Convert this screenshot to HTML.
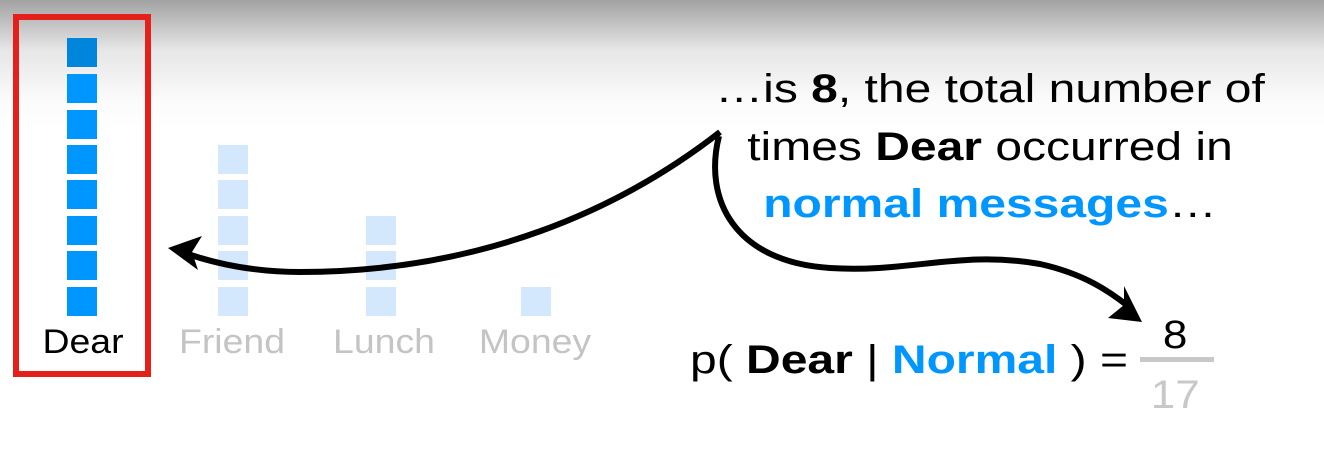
<!DOCTYPE html>
<html><head><style>
body{margin:0;width:1324px;height:450px;overflow:hidden;font-family:"Liberation Sans",sans-serif;background:linear-gradient(#a2a2a2 0px,#e6e6e6 50px,#fbfbfb 100px,#fff 130px);position:relative}
.sq{position:absolute;width:30px;height:29px}
.d{background:#0096ff}
.l{background:#d3e8fd}
.lab{position:absolute;font-size:34px;line-height:34px;top:325px;transform:translateX(-50%) scaleX(1.1);color:#c4c4c4;white-space:nowrap}
.t{position:absolute;font-size:40px;line-height:40px;left:690px;width:600px;text-align:center;white-space:nowrap;transform:scaleX(1.2)}
b{font-weight:bold}
.bl{color:#0096ff}
</style></head><body>
<div style="position:absolute;left:13px;top:14px;width:126px;height:351px;border:6px solid #e3201a"></div>
<div class="sq d" style="left:67px;top:38px;background:#0085dd"></div>
<div class="sq d" style="left:67px;top:74px"></div>
<div class="sq d" style="left:67px;top:110px"></div>
<div class="sq d" style="left:67px;top:145px"></div>
<div class="sq d" style="left:67px;top:180px"></div>
<div class="sq d" style="left:67px;top:216px"></div>
<div class="sq d" style="left:67px;top:251px"></div>
<div class="sq d" style="left:67px;top:287px"></div>
<div class="sq l" style="left:218px;top:145px"></div>
<div class="sq l" style="left:218px;top:180px"></div>
<div class="sq l" style="left:218px;top:216px"></div>
<div class="sq l" style="left:218px;top:251px"></div>
<div class="sq l" style="left:218px;top:287px"></div>
<div class="sq l" style="left:366px;top:216px"></div>
<div class="sq l" style="left:366px;top:251px"></div>
<div class="sq l" style="left:366px;top:287px"></div>
<div class="sq l" style="left:521px;top:287px"></div>
<div class="lab" style="left:83px;color:#000">Dear</div>
<div class="lab" style="left:232px">Friend</div>
<div class="lab" style="left:384px">Lunch</div>
<div class="lab" style="left:535px">Money</div>
<div class="t" style="top:69px">…is <b>8</b>, the total number of</div>
<div class="t" style="top:127px">times <b>Dear</b> occurred in</div>
<div class="t" style="top:184px"><b class="bl">normal messages</b>…</div>
<div style="position:absolute;left:690px;top:340px;font-size:40px;line-height:40px;white-space:nowrap;transform-origin:0 0;transform:scaleX(1.2)">p( <b>Dear</b> | <b class="bl">Normal</b> ) =</div>
<div style="position:absolute;left:1140px;top:357px;width:74px;height:5px;background:#c8c8c8"></div>
<div style="position:absolute;left:1164px;top:315px;font-size:40px;line-height:40px;transform:scaleX(1.1)">8</div>
<div style="position:absolute;left:1153px;top:375px;font-size:40px;line-height:40px;color:#c8c8c8;transform:scaleX(1.1)">17</div>
<svg width="1324" height="450" style="position:absolute;left:0;top:0">
<path d="M720 132 C620 210 480 272 300 272 C250 272 210 262 182 252" fill="none" stroke="#000" stroke-width="6"/>
<polygon points="168,248 202,236 192,252 198,270" fill="#000"/>
<path d="M719 136 C703 200 735 262 830 268 C910 273 960 250 1040 264 C1085 274 1110 292 1128 306" fill="none" stroke="#000" stroke-width="6"/>
<polygon points="1142,322 1108,318 1124,305 1124,286" fill="#000"/>
</svg>
</body></html>
